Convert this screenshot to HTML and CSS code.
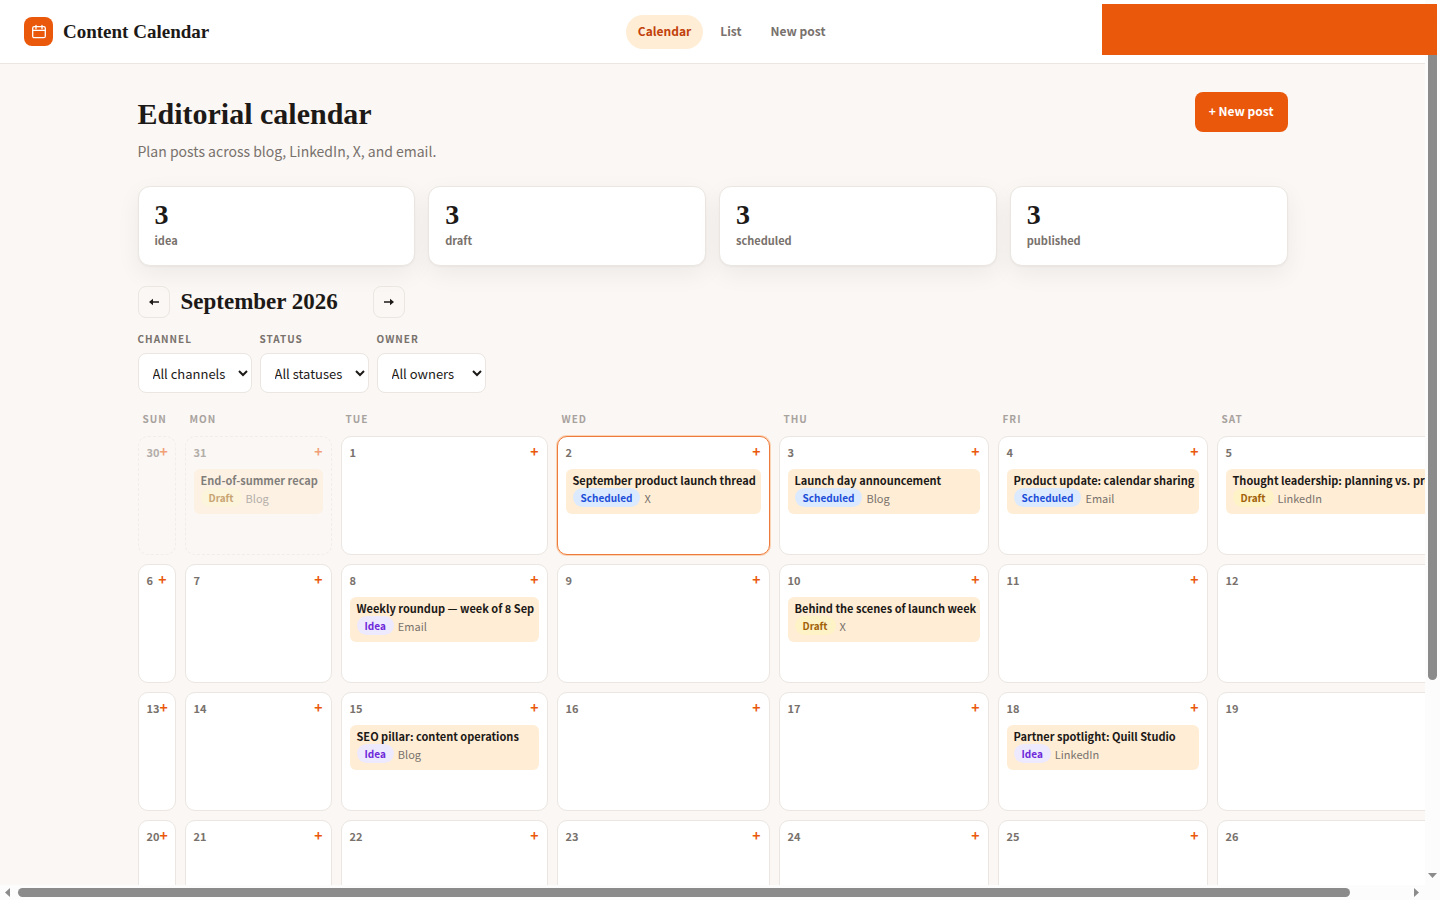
FILE: index.html
```
<!DOCTYPE html>
<html lang="en">
<head>
    <meta charset="UTF-8">
    <meta name="viewport" content="width=device-width, initial-scale=1.0">
    <title>Content Calendar</title>
    <link rel="stylesheet" href="styles.css">
</head>
<body>
    <div class="window">
        <div class="page">
            <header class="topbar">
                <a class="brand" href="#">
                    <span class="brand-mark">
                        <svg width="16" height="16" viewBox="0 0 16 16" fill="none" stroke="currentColor" stroke-width="1.3" stroke-linecap="round" stroke-linejoin="round">
                            <rect x="1.7" y="2.7" width="12.6" height="11" rx="1.5"/>
                            <path d="M1.7 6.300h12.600M5 1.500v3.200M11 1.500v3.200"/>
                        </svg>
                    </span>
                    Content Calendar
                </a>
                <nav class="nav">
                    <a class="nav-link active" href="#">Calendar</a>
                    <a class="nav-link" href="#">List</a>
                    <a class="nav-link" href="#">New post</a>
                </nav>
                <div class="topbar-end"></div>
            </header>

            <main class="content">
                <div class="page-head">
                    <div>
                        <h1>Editorial calendar</h1>
                        <p class="subtitle">Plan posts across blog, LinkedIn, X, and email.</p>
                    </div>
                    <a class="btn-primary" href="#">+ New post</a>
                </div>

                <section class="stats">
                    <div class="stat"><strong>3</strong><span>idea</span></div>
                    <div class="stat"><strong>3</strong><span>draft</span></div>
                    <div class="stat"><strong>3</strong><span>scheduled</span></div>
                    <div class="stat"><strong>3</strong><span>published</span></div>
                </section>

                <div class="month">
                    <button class="month-btn" type="button" aria-label="Previous month">
                        <svg width="10" height="8" viewBox="0 0 10 8"><path d="M0 4l4-3.200v2.400h6v1.600H4v2.400z"/></svg>
                    </button>
                    <h2>September 2026</h2>
                    <button class="month-btn" type="button" aria-label="Next month">
                        <svg width="10" height="8" viewBox="0 0 10 8"><path d="M10 4L6 .8v2.400H0v1.600h6v2.400z"/></svg>
                    </button>
                </div>

                <form class="filters">
                    <div class="filter">
                        <label for="channel">CHANNEL</label>
                        <select id="channel"><option>All channels</option></select>
                    </div>
                    <div class="filter">
                        <label for="status">STATUS</label>
                        <select id="status"><option>All statuses</option></select>
                    </div>
                    <div class="filter">
                        <label for="owner">OWNER</label>
                        <select id="owner"><option>All owners</option></select>
                    </div>
                </form>

                <div class="calendar weekdays">
                    <span>SUN</span>
                    <span>MON</span>
                    <span>TUE</span>
                    <span>WED</span>
                    <span>THU</span>
                    <span>FRI</span>
                    <span>SAT</span>
                </div>

                <div class="calendar days">
                    <div class="day outside"><div class="day-head"><span>30</span><a href="#">+</a></div></div>
                    <div class="day outside">
                        <div class="day-head"><span>31</span><a href="#">+</a></div>
                        <a class="post" href="#"><strong>End-of-summer recap</strong><span class="meta"><span class="badge draft">Draft</span>Blog</span></a>
                    </div>
                    <div class="day"><div class="day-head"><span>1</span><a href="#">+</a></div></div>
                    <div class="day today">
                        <div class="day-head"><span>2</span><a href="#">+</a></div>
                        <a class="post" href="#"><strong>September product launch thread</strong><span class="meta"><span class="badge scheduled">Scheduled</span>X</span></a>
                    </div>
                    <div class="day">
                        <div class="day-head"><span>3</span><a href="#">+</a></div>
                        <a class="post" href="#"><strong>Launch day announcement</strong><span class="meta"><span class="badge scheduled">Scheduled</span>Blog</span></a>
                    </div>
                    <div class="day">
                        <div class="day-head"><span>4</span><a href="#">+</a></div>
                        <a class="post" href="#"><strong>Product update: calendar sharing</strong><span class="meta"><span class="badge scheduled">Scheduled</span>Email</span></a>
                    </div>
                    <div class="day">
                        <div class="day-head"><span>5</span></div>
                        <a class="post" href="#"><strong>Thought leadership: planning vs. process</strong><span class="meta"><span class="badge draft">Draft</span>LinkedIn</span></a>
                    </div>

                    <div class="day"><div class="day-head"><span>6</span><a href="#">+</a></div></div>
                    <div class="day"><div class="day-head"><span>7</span><a href="#">+</a></div></div>
                    <div class="day">
                        <div class="day-head"><span>8</span><a href="#">+</a></div>
                        <a class="post" href="#"><strong>Weekly roundup — week of 8 Sep</strong><span class="meta"><span class="badge idea">Idea</span>Email</span></a>
                    </div>
                    <div class="day"><div class="day-head"><span>9</span><a href="#">+</a></div></div>
                    <div class="day">
                        <div class="day-head"><span>10</span><a href="#">+</a></div>
                        <a class="post" href="#"><strong>Behind the scenes of launch week</strong><span class="meta"><span class="badge draft">Draft</span>X</span></a>
                    </div>
                    <div class="day"><div class="day-head"><span>11</span><a href="#">+</a></div></div>
                    <div class="day"><div class="day-head"><span>12</span></div></div>

                    <div class="day"><div class="day-head"><span>13</span><a href="#">+</a></div></div>
                    <div class="day"><div class="day-head"><span>14</span><a href="#">+</a></div></div>
                    <div class="day">
                        <div class="day-head"><span>15</span><a href="#">+</a></div>
                        <a class="post" href="#"><strong>SEO pillar: content operations</strong><span class="meta"><span class="badge idea">Idea</span>Blog</span></a>
                    </div>
                    <div class="day"><div class="day-head"><span>16</span><a href="#">+</a></div></div>
                    <div class="day"><div class="day-head"><span>17</span><a href="#">+</a></div></div>
                    <div class="day">
                        <div class="day-head"><span>18</span><a href="#">+</a></div>
                        <a class="post" href="#"><strong>Partner spotlight: Quill Studio</strong><span class="meta"><span class="badge idea">Idea</span>LinkedIn</span></a>
                    </div>
                    <div class="day"><div class="day-head"><span>19</span></div></div>

                    <div class="day"><div class="day-head"><span>20</span><a href="#">+</a></div></div>
                    <div class="day"><div class="day-head"><span>21</span><a href="#">+</a></div></div>
                    <div class="day"><div class="day-head"><span>22</span><a href="#">+</a></div></div>
                    <div class="day"><div class="day-head"><span>23</span><a href="#">+</a></div></div>
                    <div class="day"><div class="day-head"><span>24</span><a href="#">+</a></div></div>
                    <div class="day"><div class="day-head"><span>25</span><a href="#">+</a></div></div>
                    <div class="day"><div class="day-head"><span>26</span></div></div>
                </div>
            </main>
        </div>

        <div class="scroll-y">
            <div class="thumb"></div>
            <svg width="9" height="5" viewBox="0 0 9 5"><path d="M0 0h9L4.500 5z"/></svg>
        </div>
        <div class="scroll-x">
            <svg width="5" height="9" viewBox="0 0 5 9"><path d="M5 0v9L0 4.500z"/></svg>
            <div class="track"><div class="thumb"></div></div>
            <svg width="5" height="9" viewBox="0 0 5 9"><path d="M0 0v9l5-4.500z"/></svg>
        </div>
    </div>
    <div class="banner"></div>
</body>
</html>
```
FILE: styles.css
```
* {
    box-sizing: border-box;
}
body {
    margin: 0;
    font-family: "Noto Sans CJK SC", "Noto Sans", sans-serif;
    font-size: 14px;
    line-height: 20px;
    color: #1c1917;
    background: #faf7f4;
}
a {
    color: inherit;
    text-decoration: none;
}
h1, h2, p {
    margin: 0;
}
h1, h2, .brand, .stat strong {
    font-family: "Liberation Serif", serif;
    font-weight: bold;
}

/* window frame with its scrollbars */
.window {
    display: grid;
    grid-template-columns: minmax(0, 1fr) 15px;
    grid-template-rows: minmax(0, 1fr) 15px;
    height: 100vh;
    background: #fcfcfc;
}
.page {
    overflow: hidden;
    background: #faf7f4;
}
.scroll-y {
    display: flex;
    flex-direction: column;
    align-items: center;
    justify-content: space-between;
    padding: 18px 0 7px;
}
.scroll-y .thumb {
    width: 9px;
    height: 77%;
    border-radius: 5px;
    background: #8b8b8b;
}
.scroll-x {
    display: flex;
    align-items: center;
    padding: 0 6px 0 5px;
}
.track {
    flex: 1;
    padding: 0 8px;
}
.scroll-x .thumb {
    width: 96%;
    height: 9px;
    border-radius: 5px;
    background: #8b8b8b;
}
.scroll-y svg, .scroll-x svg {
    fill: #8b8b8b;
}
.banner {
    position: fixed;
    top: 4px;
    right: 3px;
    width: 335px;
    height: 51px;
    background: #ea580c;
}

.topbar {
    display: flex;
    align-items: center;
    justify-content: space-between;
    height: 64px;
    padding: 0 24px;
    background: #fff;
    border-bottom: 1px solid #ebe6e1;
}
.brand {
    display: flex;
    align-items: center;
    gap: 10px;
    font-size: 19px;
}
.brand-mark {
    display: flex;
    align-items: center;
    justify-content: center;
    width: 29px;
    height: 29px;
    border-radius: 8px;
    color: #fff;
    background: #ea580c;
}
.nav {
    display: flex;
    gap: 5px;
}
.nav-link {
    padding: 6px 12px 8px;
    border-radius: 17px;
    font-size: 12px;
    font-weight: 600;
    color: #78716c;
}
.nav-link.active {
    color: #c2410c;
    background: #ffedd5;
}
.topbar-end {
    width: 147px;
}

.content {
    max-width: 1150px;
    margin: 0 auto;
    padding-top: 28px;
}
.page-head {
    display: flex;
    align-items: flex-start;
    justify-content: space-between;
    margin-bottom: 25px;
}
h1 {
    font-size: 30px;
    line-height: 44px;
}
.subtitle {
    margin-top: 5px;
    color: #78716c;
}
.btn-primary {
    padding: 9px 14px 11px;
    border-radius: 8px;
    font-size: 12px;
    font-weight: bold;
    color: #fff;
    background: #ea580c;
}
.stats {
    display: grid;
    grid-template-columns: repeat(4, 1fr);
    gap: 13px;
    margin-bottom: 20px;
}
.stat {
    display: flex;
    flex-direction: column;
    height: 80px;
    padding: 12px 16px;
    border: 1px solid #ebe6e1;
    border-radius: 12px;
    background: #fff;
    box-shadow: 0 1px 2px rgba(28, 25, 23, 0.04), 0 8px 24px rgba(28, 25, 23, 0.06);
}
.stat strong {
    font-size: 28px;
    line-height: 32px;
}
.stat span {
    font-size: 11px;
    font-weight: 600;
    line-height: 18px;
    color: #78716c;
}
.month {
    display: flex;
    align-items: center;
    gap: 11px;
    margin-bottom: 12px;
}
h2 {
    min-width: 181px;
    font-size: 23px;
    line-height: 32px;
}
.month-btn {
    display: flex;
    align-items: center;
    justify-content: center;
    width: 32px;
    height: 32px;
    padding: 0;
    border: 1px solid #ebe6e1;
    border-radius: 8px;
    background: transparent;
}
.month-btn svg {
    fill: #1c1917;
}
.filters {
    display: flex;
    gap: 8px;
    margin-bottom: 18px;
}
.filter {
    display: flex;
    flex-direction: column;
    gap: 5px;
}
.filter label {
    font-size: 10px;
    font-weight: bold;
    line-height: 18px;
    letter-spacing: 1px;
    color: #78716c;
}
.filter select {
    height: 40px;
    padding: 0 0 0 10px;
    border: 1px solid #ebe6e1;
    border-radius: 8px;
    font-family: inherit;
    font-size: 13px;
    color: #1c1917;
    background: #fff;
}
#channel {
    width: 114px;
}
#status, #owner {
    width: 109px;
}

.calendar {
    display: grid;
    grid-template-columns: 38px 147px 207px 213px 210px 210px 300px;
    gap: 9px;
}
.weekdays {
    margin-bottom: 9px;
    font-size: 10px;
    font-weight: bold;
    line-height: 16px;
    letter-spacing: 1px;
    color: #a8a29e;
}
.weekdays span {
    padding-left: 5px;
}
.days {
    grid-auto-rows: 119px;
}
.day {
    padding: 8px;
    border: 1px solid #ebe6e1;
    border-radius: 10px;
    background: #fff;
}
.day.outside {
    border-style: dashed;
    background: transparent;
    opacity: 0.55;
}
.day.today {
    border-color: #ee7a3c;
    box-shadow: 0 0 0 1px #fbd3b5;
}
.day-head {
    display: flex;
    justify-content: space-between;
    height: 24px;
    line-height: 14px;
    font-size: 11px;
    font-weight: bold;
    color: #78716c;
}
.day-head a {
    font-size: 14px;
    line-height: 13px;
    color: #ea580c;
}
.post {
    display: block;
    height: 45px;
    padding: 3px 7px;
    border-radius: 6px;
    font-size: 11px;
    line-height: 16px;
    white-space: nowrap;
    background: #ffedd5;
}
.post strong {
    display: block;
}
.meta {
    display: flex;
    align-items: center;
    gap: 4px;
    color: #78716c;
}
.badge {
    padding: 0 8px;
    border-radius: 10px;
    font-size: 10px;
    font-weight: bold;
    line-height: 19px;
}
.idea {
    color: #6d28d9;
    background: #ede9fe;
}
.draft {
    color: #a16207;
    background: #fef3c7;
}
.scheduled {
    color: #1d4ed8;
    background: #dbeafe;
}
```
